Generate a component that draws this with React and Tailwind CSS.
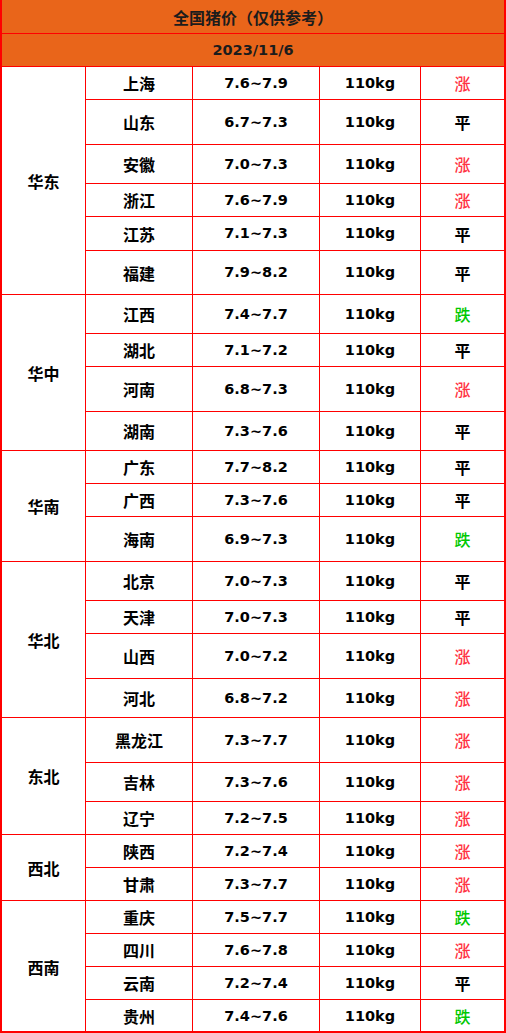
import React from "react";

const groups = [
  {
    name: "华东",
    rows: [
      ["上海", "7.6~7.9", "涨", 33],
      ["山东", "6.7~7.3", "平", 45],
      ["安徽", "7.0~7.3", "涨", 39],
      ["浙江", "7.6~7.9", "涨", 33],
      ["江苏", "7.1~7.3", "平", 34],
      ["福建", "7.9~8.2", "平", 44],
    ],
  },
  {
    name: "华中",
    rows: [
      ["江西", "7.4~7.7", "跌", 39],
      ["湖北", "7.1~7.2", "平", 33],
      ["河南", "6.8~7.3", "涨", 45],
      ["湖南", "7.3~7.6", "平", 39],
    ],
  },
  {
    name: "华南",
    rows: [
      ["广东", "7.7~8.2", "平", 33],
      ["广西", "7.3~7.6", "平", 33],
      ["海南", "6.9~7.3", "跌", 45],
    ],
  },
  {
    name: "华北",
    rows: [
      ["北京", "7.0~7.3", "平", 39],
      ["天津", "7.0~7.3", "平", 33],
      ["山西", "7.0~7.2", "涨", 45],
      ["河北", "6.8~7.2", "涨", 39],
    ],
  },
  {
    name: "东北",
    rows: [
      ["黑龙江", "7.3~7.7", "涨", 45],
      ["吉林", "7.3~7.6", "涨", 39],
      ["辽宁", "7.2~7.5", "涨", 33],
    ],
  },
  {
    name: "西北",
    rows: [
      ["陕西", "7.2~7.4", "涨", 33],
      ["甘肃", "7.3~7.7", "涨", 33],
    ],
  },
  {
    name: "西南",
    rows: [
      ["重庆", "7.5~7.7", "跌", 33],
      ["四川", "7.6~7.8", "涨", 33],
      ["云南", "7.2~7.4", "平", 33],
      ["贵州", "7.4~7.6", "跌", 32],
    ],
  },
];

function Status({ s }) {
  if (s === "涨") return <span className="text-[#ff3344] font-medium">涨</span>;
  if (s === "跌") return <span className="text-[#00c800] font-medium">跌</span>;
  return <span className="text-black font-bold">平</span>;
}

const latin = "font-['DejaVu_Sans','Noto_Sans_CJK_SC',sans-serif] text-[14.5px] font-bold";

export default function App() {
  return (
    <div className="w-[506px] h-[1033px] bg-white border-l-2 border-r-2 border-b-2 border-[#ff0000] flex flex-col font-['Noto_Sans_CJK_SC',sans-serif] text-[16px] font-bold text-black leading-none">
      <div className="h-[34px] shrink-0 bg-[#e9651a] border-b border-[#ff0000] flex items-center justify-center text-[#1c1c1c]">
        全国猪价（仅供参考）
      </div>
      <div className={"h-[33px] shrink-0 bg-[#e9651a] border-b border-[#ff0000] flex items-center justify-center text-[#1c1c1c] " + latin}>
        2023/11/6
      </div>
      {groups.map((g, gi) => {
        const lastGroup = gi === groups.length - 1;
        return (
          <div key={g.name} className="flex shrink-0">
            <div
              className={
                "w-[84px] shrink-0 border-r border-[#ff0000] flex items-center justify-center " +
                (lastGroup ? "" : "border-b")
              }
            >
              {g.name}
            </div>
            <div className="flex-1 flex flex-col">
              {g.rows.map((r, i) => {
                const last = lastGroup && i === g.rows.length - 1;
                return (
                  <div
                    key={r[0]}
                    className={"flex border-[#ff0000] " + (last ? "" : "border-b")}
                    style={{ height: r[3] }}
                  >
                    <div className="w-[107px] shrink-0 border-r border-[#ff0000] flex items-center justify-center">
                      {r[0]}
                    </div>
                    <div className={"w-[127px] shrink-0 border-r border-[#ff0000] flex items-center justify-center " + latin}>
                      {r[1]}
                    </div>
                    <div className={"w-[101px] shrink-0 border-r border-[#ff0000] flex items-center justify-center " + latin}>
                      110kg
                    </div>
                    <div className="flex-1 flex items-center justify-center">
                      <Status s={r[2]} />
                    </div>
                  </div>
                );
              })}
            </div>
          </div>
        );
      })}
    </div>
  );
}
